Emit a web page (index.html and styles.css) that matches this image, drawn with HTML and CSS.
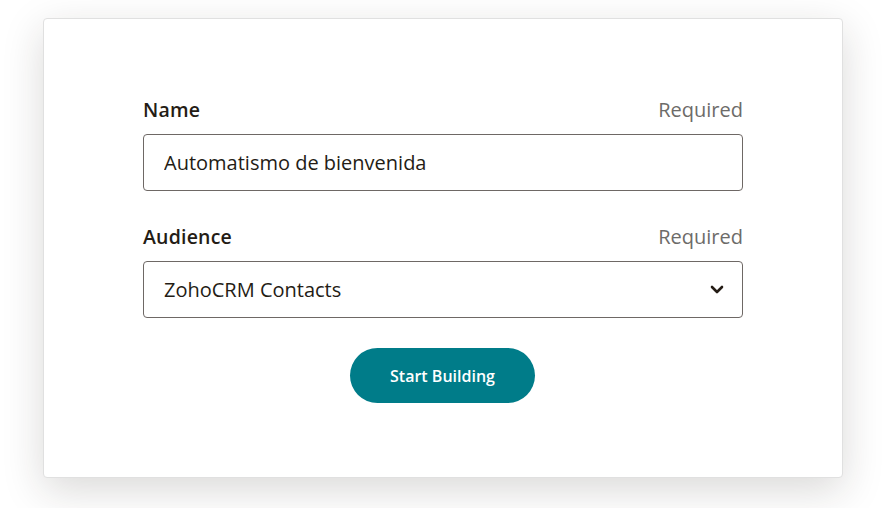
FILE: index.html
```html
<!DOCTYPE html>
<html lang="en">

<head>
    <meta charset="UTF-8">
    <meta name="viewport" content="width=device-width, initial-scale=1.0">
    <title>Create Automation</title>
    <link rel="stylesheet" href="styles.css">
</head>

<body>

    <div class="card">
        <form class="form">
            <div class="field">
                <div class="label-row">
                    <label for="nameInput">Name</label>
                    <span class="required">Required</span>
                </div>
                <input type="text" id="nameInput" value="Automatismo de bienvenida">
            </div>

            <div class="field">
                <div class="label-row">
                    <label for="audienceSelect">Audience</label>
                    <span class="required">Required</span>
                </div>
                <div class="select-box" id="audienceSelect">
                    <span>ZohoCRM Contacts</span>
                    <svg class="chevron" width="14" height="9" viewBox="0 0 14 9">
                        <path d="M2 2 L7 7 L12 2" fill="none" stroke="#241c15" stroke-width="2.6" stroke-linecap="round" stroke-linejoin="round"/>
                    </svg>
                </div>
            </div>

            <div class="actions">
                <button type="button">Start Building</button>
            </div>
        </form>
    </div>

</body>

</html>
```

FILE: styles.css
```css
body {
    margin: 0;
    min-height: 508px;
    background-color: #fff;
    font-family: "Open Sans", Arial, sans-serif;
    color: #241c15;
    overflow: hidden;
}

.card {
    width: 798px;
    height: 458px;
    margin: 18px 0 0 43px;
    background: #fff;
    border: 1px solid #e0e0e0;
    border-radius: 4px;
    box-shadow: 0 12px 40px rgba(36, 28, 21, 0.17);
    display: flex;
    justify-content: center;
}

.form {
    width: 600px;
    padding-top: 79px;
}

.field {
    margin-bottom: 34px;
}

.label-row {
    display: flex;
    justify-content: space-between;
    align-items: baseline;
    line-height: 24px;
    margin-bottom: 12px;
}

label {
    font-size: 19.5px;
    font-weight: 600;
    letter-spacing: 0.2px;
}

.required {
    font-size: 20px;
    color: #6d6b69;
}

input,
.select-box {
    box-sizing: border-box;
    width: 100%;
    height: 57px;
    padding: 0 20px;
    border: 1px solid #6e6865;
    border-radius: 4px;
    font-family: inherit;
    font-size: 20px;
    color: #241c15;
    background: #fff;
}

.select-box {
    display: flex;
    align-items: center;
    justify-content: space-between;
    padding-right: 18px;
}

.actions {
    display: flex;
    justify-content: center;
    margin-top: -4px;
}

button {
    width: 185px;
    height: 55px;
    margin-right: 1px;
    border: none;
    border-radius: 28px;
    background-color: #007c89;
    color: #fff;
    font-family: inherit;
    font-size: 16px;
    font-weight: 600;
    cursor: pointer;
}
```
